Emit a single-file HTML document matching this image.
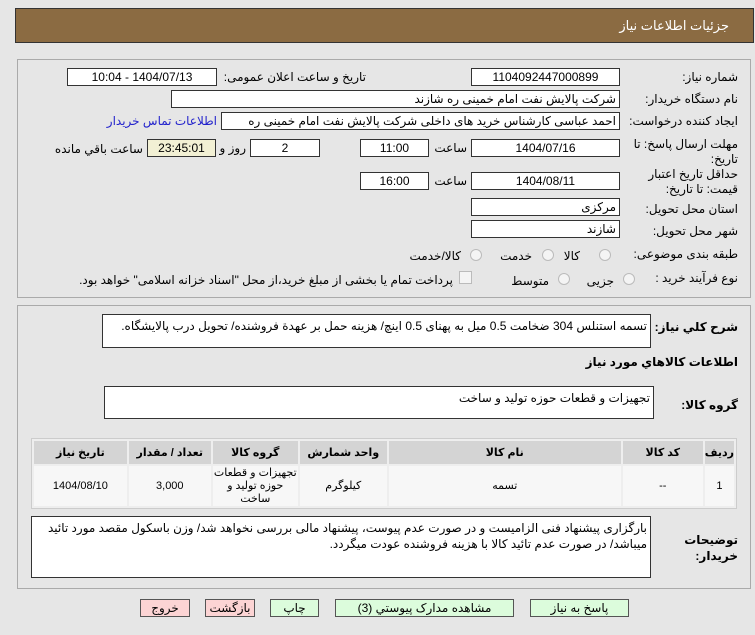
<!DOCTYPE html>
<html dir="rtl"><head><meta charset="utf-8"><style>
*{box-sizing:border-box;margin:0;padding:0}
body{width:755px;height:635px;background:#e6e6e6;font-family:"Liberation Sans","DejaVu Sans",sans-serif;font-size:12px;color:#000;position:relative;overflow:hidden}
.a{position:absolute;white-space:nowrap}
.hdr{position:absolute;left:15px;top:8px;width:739px;height:35px;background:#8b6b42;border:1px solid #333;color:#fff;font-size:13px}
.panel{position:absolute;border:1px solid #aaa;background:#e6e6e6}
.in{position:absolute;background:#fff;border:1px solid #333;height:18px;line-height:16px;padding:0 3px;text-align:center;white-space:nowrap;overflow:hidden}
.r{text-align:right}
.ta{position:absolute;background:#fff;border:1px solid #333;padding:3px;text-align:right;line-height:16px}
.lbl{position:absolute;white-space:nowrap;text-align:right}
.rad{position:absolute;width:12px;height:12px;border-radius:50%;border:1px solid #bbb;background:#f4f4f4}
table{position:absolute;left:31px;top:438px;width:706px;border-collapse:separate;border-spacing:2px;background:#eee;border:1px solid #ccc}
th{background:#d4d4d4;height:23px;font-weight:bold;font-size:11px}
td{background:#f7f7f7;height:40px;text-align:center;font-size:11px;line-height:13px}
.btn{position:absolute;top:599px;height:18px;border:1px solid #555;text-align:center;line-height:16px;font-size:12px}
.g{background:#dcfcdc}.p{background:#fcd4d4}
</style></head><body>
<div class="hdr"><span class="a" style="right:24px;top:9px">جزئیات اطلاعات نیاز</span></div>
<div class="panel" style="left:17px;top:59px;width:734px;height:239px"></div>
<div class="lbl" style="right:17px;top:70px">شماره نیاز:</div>
<div class="in" style="left:471px;top:68px;width:149px">1104092447000899</div>
<div class="lbl" style="right:389px;top:70px">تاریخ و ساعت اعلان عمومی:</div>
<div class="in" style="left:67px;top:68px;width:150px">1404/07/13 - 10:04</div>
<div class="lbl" style="right:17px;top:92px">نام دستگاه خریدار:</div>
<div class="in r" style="left:171px;top:90px;width:449px">شرکت پالایش نفت امام خمینی  ره  شازند</div>
<div class="lbl" style="right:17px;top:114px">ایجاد کننده درخواست:</div>
<div class="in r" style="left:221px;top:112px;width:399px">احمد عباسی کارشناس خرید های داخلی  شرکت پالایش نفت امام خمینی  ره</div>
<div class="lbl" style="right:538px;top:114px;color:#22c">اطلاعات تماس خریدار</div>
<div class="lbl" style="right:17px;top:137px;line-height:15px">مهلت ارسال پاسخ: تا<br>تاریخ:</div>
<div class="in" style="left:471px;top:139px;width:149px">1404/07/16</div>
<div class="lbl" style="right:288px;top:141px">ساعت</div>
<div class="in" style="left:360px;top:139px;width:69px">11:00</div>
<div class="in" style="left:250px;top:139px;width:70px">2</div>
<div class="lbl" style="right:509px;top:141px">روز و</div>
<div class="in" style="left:147px;top:139px;width:69px;background:#f2f0d4">23:45:01</div>
<div class="lbl" style="right:612px;top:142px">ساعت باقي مانده</div>
<div class="lbl" style="right:17px;top:167px;line-height:15px">حداقل تاریخ اعتبار<br>قیمت: تا تاریخ:</div>
<div class="in" style="left:471px;top:172px;width:149px">1404/08/11</div>
<div class="lbl" style="right:288px;top:174px">ساعت</div>
<div class="in" style="left:360px;top:172px;width:69px">16:00</div>
<div class="lbl" style="right:17px;top:202px">استان محل تحویل:</div>
<div class="in r" style="left:471px;top:198px;width:149px">مرکزی</div>
<div class="lbl" style="right:17px;top:224px">شهر محل تحویل:</div>
<div class="in r" style="left:471px;top:220px;width:149px">شازند</div>
<div class="lbl" style="right:17px;top:247px">طبقه بندی موضوعی:</div>
<div class="rad" style="left:599px;top:249px"></div><div class="lbl" style="right:175px;top:249px">کالا</div>
<div class="rad" style="left:542px;top:249px"></div><div class="lbl" style="right:223px;top:249px">خدمت</div>
<div class="rad" style="left:470px;top:249px"></div><div class="lbl" style="right:294px;top:249px">کالا/خدمت</div>
<div class="lbl" style="right:17px;top:271px">نوع فرآیند خرید :</div>
<div class="rad" style="left:623px;top:273px"></div><div class="lbl" style="right:141px;top:274px">جزیی</div>
<div class="rad" style="left:558px;top:273px"></div><div class="lbl" style="right:206px;top:274px">متوسط</div>
<div class="a" style="left:459px;top:271px;width:13px;height:13px;border:1px solid #bbb;background:#f4f4f4"></div>
<div class="lbl" style="right:302px;top:273px">پرداخت تمام یا بخشی از مبلغ خرید،از محل "اسناد خزانه اسلامی" خواهد بود.</div>
<div class="panel" style="left:17px;top:305px;width:734px;height:284px"></div>
<div class="lbl" style="right:17px;top:320px;font-weight:bold">شرح كلي نياز:</div>
<div class="ta" style="left:102px;top:314px;width:549px;height:34px">تسمه استنلس 304 ضخامت 0.5 میل به پهنای 0.5 اینچ/ هزینه حمل بر عهدة فروشنده/ تحویل درب پالایشگاه.</div>
<div class="lbl" style="right:17px;top:355px;font-weight:bold">اطلاعات كالاهاي مورد نياز</div>
<div class="lbl" style="right:17px;top:398px;font-weight:bold">گروه کالا:</div>
<div class="ta" style="left:104px;top:386px;width:550px;height:33px">تجهیزات و قطعات حوزه تولید و ساخت</div>
<table><tr><th style="width:25px">رديف</th><th style="width:80px">کد کالا</th><th style="width:232px">نام کالا</th><th style="width:87px">واحد شمارش</th><th style="width:85px">گروه کالا</th><th style="width:82px">تعداد / مقدار</th><th>تاريخ نياز</th></tr>
<tr><td>1</td><td>--</td><td>تسمه</td><td>کیلوگرم</td><td>تجهیزات و قطعات حوزه تولید و ساخت</td><td>3,000</td><td>1404/08/10</td></tr></table>
<div class="lbl" style="right:17px;top:532px;font-weight:bold;line-height:16px">توضیحات<br>خریدار:</div>
<div class="ta" style="left:31px;top:516px;width:620px;height:62px">بارگزاری پیشنهاد فنی الزامیست و در صورت عدم پیوست، پیشنهاد مالی بررسی نخواهد شد/ وزن باسکول مقصد مورد تائید میباشد/ در صورت عدم تائید کالا با هزینه فروشنده عودت میگردد.</div>
<div class="btn p" style="left:140px;width:50px">خروج</div>
<div class="btn p" style="left:205px;width:50px">بازگشت</div>
<div class="btn g" style="left:270px;width:49px">چاپ</div>
<div class="btn g" style="left:335px;width:179px">مشاهده مدارک پیوستي (3)</div>
<div class="btn g" style="left:530px;width:99px">پاسخ به نیاز</div>
</body></html>
